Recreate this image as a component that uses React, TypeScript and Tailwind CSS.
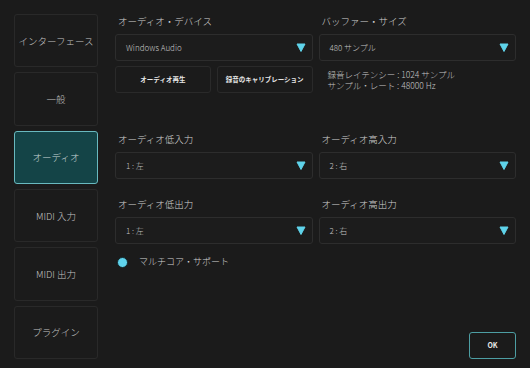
const tabs = ['インターフェース', '一般', 'オーディオ', 'MIDI 入力', 'MIDI 出力', 'プラグイン']

function Caret() {
  return (
    <svg width="10" height="9" viewBox="0 0 10 9" className="shrink-0">
      <path d="M1 1 L9 1 L5 8.5 Z" fill="#5fd3ea" stroke="#5fd3ea" strokeWidth="1" strokeLinejoin="round" />
    </svg>
  )
}

function Select({ value }: { value: string }) {
  return (
    <div className="h-[27px] flex items-center justify-between pl-[10px] pr-[6px] rounded-[3px] border border-[#2d2d2d] bg-[#1c1c1c]">
      <span className="text-[8px] font-light text-[#c4c4c4]">{value}</span>
      <Caret />
    </div>
  )
}

function Label({ children }: { children: string }) {
  return <div className="h-[14px] leading-[14px] pl-[3px] text-[9.5px] font-light text-[#d2d2d2]">{children}</div>
}

export default function App() {
  return (
    <div
      className="w-[530px] h-[368px] bg-[#1b1b1b] flex pt-[14px] pb-[9px] pl-[14px] pr-[14px] gap-[17px]"
      style={{ fontFamily: '"Noto Sans CJK JP", "Liberation Sans", sans-serif' }}
    >
      <div className="w-[84px] flex flex-col gap-[5px]">
        {tabs.map((t) => (
          <div
            key={t}
            className={
              t === 'オーディオ'
                ? 'flex-1 flex items-center justify-center rounded-[3px] border border-[#69b9bf] bg-[#144447] text-[9.5px] font-light text-[#c9d6d6]'
                : 'flex-1 flex items-center justify-center rounded-[3px] border border-[#292929] text-[9.5px] font-light text-[#c2c2c2]'
            }
          >
            {t}
          </div>
        ))}
      </div>

      <div className="flex-1 flex flex-col">
        <div className="grid grid-cols-2 gap-x-[6px]">
          <div>
            <Label>オーディオ・デバイス</Label>
            <div className="mt-[6px]">
              <Select value="Windows Audio" />
            </div>
            <div className="mt-[5px] grid grid-cols-2 gap-[6px]">
              <div className="h-[27px] flex items-center justify-center rounded-[3px] border border-[#2a2a2a] text-[6.5px] font-bold text-[#e6e6e6]">
                オーディオ再生
              </div>
              <div className="h-[27px] flex items-center justify-center rounded-[3px] border border-[#2a2a2a] text-[6.5px] font-bold text-[#e6e6e6]">
                録音のキャリブレーション
              </div>
            </div>
          </div>
          <div>
            <Label>バッファー・サイズ</Label>
            <div className="mt-[6px]">
              <Select value="480 サンプル" />
            </div>
            <div className="mt-[5px] h-[27px] flex flex-col justify-center pl-[9px] text-[8.5px] font-light leading-[11px] text-[#c4c4c4]">
              <div>録音レイテンシー : 1024 サンプル</div>
              <div>サンプル・レート : 48000 Hz</div>
            </div>
          </div>
        </div>

        <div className="mt-[39px] grid grid-cols-2 gap-x-[6px]">
          <div>
            <Label>オーディオ低入力</Label>
            <div className="mt-[6px]">
              <Select value="1 : 左" />
            </div>
          </div>
          <div>
            <Label>オーディオ高入力</Label>
            <div className="mt-[6px]">
              <Select value="2 : 右" />
            </div>
          </div>
        </div>

        <div className="mt-[18px] grid grid-cols-2 gap-x-[6px]">
          <div>
            <Label>オーディオ低出力</Label>
            <div className="mt-[6px]">
              <Select value="1 : 左" />
            </div>
          </div>
          <div>
            <Label>オーディオ高出力</Label>
            <div className="mt-[6px]">
              <Select value="2 : 右" />
            </div>
          </div>
        </div>

        <div className="mt-[12px] h-[12px] flex items-center gap-[11px] pl-[2px]">
          <div className="w-[11px] h-[11px] rounded-full bg-[#5fd3ec] border-[1.5px] border-[#10282c]" />
          <span className="text-[9px] font-light text-[#d2d2d2]">マルチコア・サポート</span>
        </div>

        <div className="mt-auto flex justify-end">
          <div className="w-[47px] h-[27px] flex items-center justify-center rounded-[3px] border border-[#4d9ea3] text-[7px] font-bold text-[#e6e6e6]">
            OK
          </div>
        </div>
      </div>
    </div>
  )
}
